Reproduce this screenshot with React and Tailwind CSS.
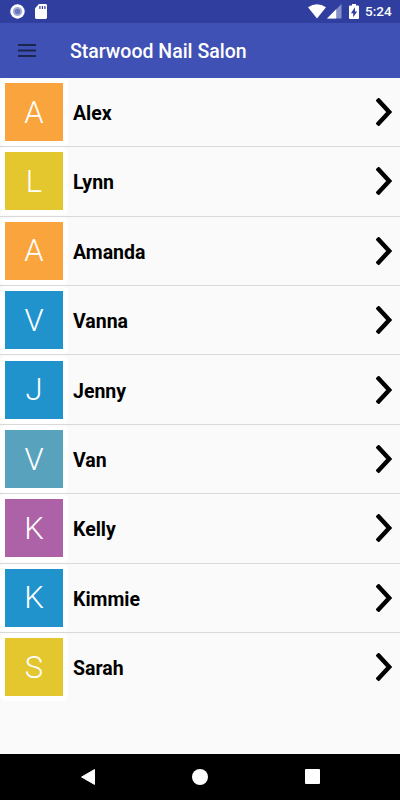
import React from 'react';

const staff = [
    { id: 1, name: 'Alex', color: 'bg-[#faa43e]' },
    { id: 2, name: 'Lynn', color: 'bg-[#e4c62e]' },
    { id: 3, name: 'Amanda', color: 'bg-[#faa43e]' },
    { id: 4, name: 'Vanna', color: 'bg-[#2093cd]' },
    { id: 5, name: 'Jenny', color: 'bg-[#2093cd]' },
    { id: 6, name: 'Van', color: 'bg-[#59a2be]' },
    { id: 7, name: 'Kelly', color: 'bg-[#ad62a7]' },
    { id: 8, name: 'Kimmie', color: 'bg-[#2093cd]' },
    { id: 9, name: 'Sarah', color: 'bg-[#e4c62e]' },
];

const StatusBar = () => (
    <div className="flex h-[23px] shrink-0 items-center justify-between bg-[#303f9f] pl-[10px] pr-[7.5px] text-white">
        <div className="flex items-center gap-[10px]">
            <svg width="15" height="15" viewBox="0 0 15 15">
                <circle cx="7.5" cy="7.5" r="7.2" fill="#fff" />
                <circle cx="7.5" cy="7.5" r="4.6" fill="#a3abd7" />
                <circle cx="7.5" cy="7.5" r="2.7" fill="#6b77bc" />
            </svg>
            <svg width="12" height="15" viewBox="0 0 12 15">
                <path d="M4 0h6.6Q12 0 12 1.4v12.2Q12 15 10.6 15H1.4Q0 15 0 13.6V4.2z" fill="#fff" />
                <path d="M4.9 2v3M7.4 2v3M9.9 2v3" stroke="#303f9f" strokeWidth="1.2" />
            </svg>
        </div>
        <div className="flex items-center">
            <svg width="18" height="15" viewBox="0 0 18 15">
                <path d="M0 3.2Q9-2.6 18 3.2L9 14.4z" fill="#fff" />
            </svg>
            <svg className="ml-[1px]" width="15" height="15" viewBox="0 0 15 15">
                <path d="M14.5 0v14.5H0z" fill="#8690c8" />
                <path d="M9.2 5.3v9.2H0z" fill="#fff" />
            </svg>
            <svg className="ml-[7px]" width="10" height="15" viewBox="0 0 10 15">
                <path d="M3 0h4v1.5h2q1 0 1 1V14q0 1-1 1H1q-1 0-1-1V2.5q0-1 1-1h2z" fill="#fff" />
                <path d="M6 3.3v4.2h2.2L4.2 13.2V9.2H1.9z" fill="#303f9f" />
            </svg>
            <span className="ml-[6.5px] w-[27.5px] whitespace-nowrap pt-px text-[13.5px] leading-none font-medium">5:24</span>
        </div>
    </div>
);

const Header = () => (
    <header className="flex h-[54.6px] shrink-0 items-center bg-[#3f51b5] pl-[18px]">
        <svg width="18" height="13" viewBox="0 0 18 13" className="shrink-0">
            <path d="M0 1h18M0 6.5h18M0 12h18" stroke="#1d254e" strokeWidth="1.8" />
        </svg>
        <h1 className="ml-[34px] pt-[2px] text-[19.5px] font-medium text-white">Starwood Nail Salon</h1>
    </header>
);

const StaffRow = ({ person }) => (
    <li className="flex h-[69.4px] items-center border-b border-[#d9d9d9]">
        <div className="rounded-[6px] bg-white p-[5px]">
            <div className={`flex h-[58px] w-[58px] items-center justify-center ${person.color}`}>
                <span className="text-[31px] leading-none font-light text-white">{person.name[0]}</span>
            </div>
        </div>
        <span className="ml-[5px] flex-1 pt-[3px] text-[19.5px] font-bold text-black">{person.name}</span>
        <svg width="16" height="28" viewBox="0 0 16 28" className="mr-[8px]">
            <path d="M2.6 2.6L13.2 14L2.6 25.4" fill="none" stroke="#000" strokeWidth="4.4" strokeLinecap="square" strokeDasharray="none" />
        </svg>
    </li>
);

const NavigationBar = () => (
    <nav className="flex h-[46.5px] shrink-0 items-center bg-black pl-[81px]">
        <svg width="14" height="16" viewBox="0 0 14 16">
            <path d="M13.5.6v14.8L.6 8z" fill="#fff" stroke="#fff" strokeLinejoin="round" />
        </svg>
        <div className="ml-[97px] h-4 w-4 rounded-full bg-white"></div>
        <div className="ml-[97px] h-[15px] w-[15px] rounded-[1px] bg-white"></div>
    </nav>
);

const App = () => {
    return (
        <div className="flex h-screen w-full flex-col overflow-hidden bg-[#fafafa] font-[Roboto,sans-serif]">
            <StatusBar />
            <Header />
            <ul className="flex-1 pt-[0.3px] [&>li:last-child]:border-transparent">
                {staff.map((person) => (
                    <StaffRow key={person.id} person={person} />
                ))}
            </ul>
            <NavigationBar />
        </div>
    );
};

export default App;
